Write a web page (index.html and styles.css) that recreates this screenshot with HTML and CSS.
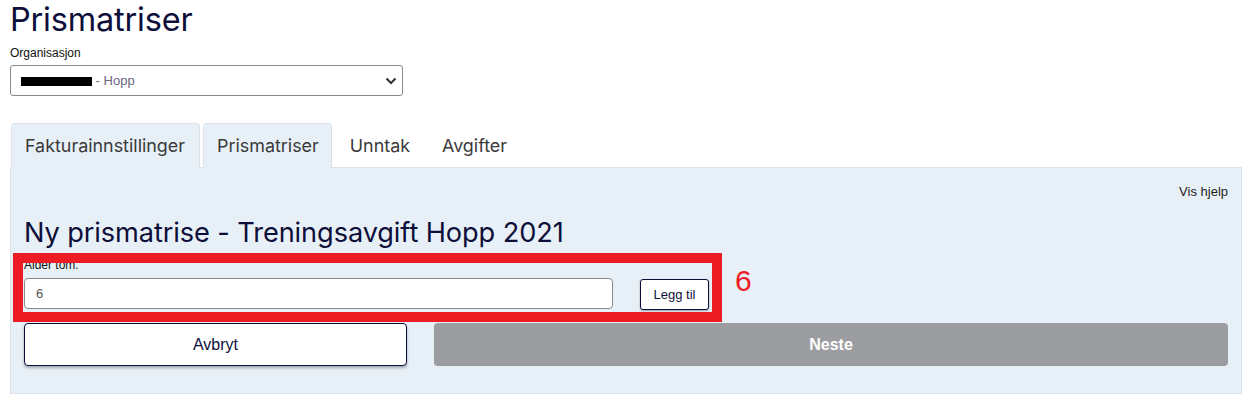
FILE: index.html
```html
<!doctype html>
<html>
<head>
<meta charset="utf-8">
<title>Prismatriser</title>
<link rel="stylesheet" href="styles.css">
</head>
<body>
<div class="page">
	<h1 class="title">Prismatriser</h1>

	<label class="small-label">Organisasjon</label>
	<div class="select-wrap">
		<div class="select"><span class="redacted"></span> - Hopp</div>
		<svg class="chevron" width="12" height="8" viewBox="0 0 12 8"><path d="M1.5 1.5 L6 6 L10.5 1.5" fill="none" stroke="#333" stroke-width="2"/></svg>
	</div>

	<ul class="tabs">
		<li class="tab filled">Fakturainnstillinger</li>
		<li class="tab filled">Prismatriser</li>
		<li class="tab">Unntak</li>
		<li class="tab">Avgifter</li>
	</ul>

	<div class="panel">
		<div class="help-row"><a class="help">Vis hjelp</a></div>
		<h2 class="sub-title">Ny prismatrise - Treningsavgift Hopp 2021</h2>

		<div class="age-block">
			<label class="small-label">Alder tom.</label>
			<div class="age-row">
				<input class="text-input" type="text" value="6">
				<div><button class="btn-add">Legg til</button></div>
			</div>
			<div class="mark"></div>
			<span class="mark-num">6</span>
		</div>

		<div class="actions">
			<button class="btn-cancel">Avbryt</button>
			<button class="btn-next">Neste</button>
		</div>
	</div>
</div>
</body>
</html>
```
FILE: styles.css
```css
*{margin:0;padding:0;box-sizing:border-box;list-style:none;}
body{background:#fff;font-family:"Liberation Sans",Arial,sans-serif;color:#1c1c1c;}
.page{padding:0 8px 0 10px;}

.title{font-family:Inter,sans-serif;font-weight:400;font-size:32.5px;line-height:40px;color:#0d0f3a;letter-spacing:-0.2px;}

.small-label{display:block;font-size:12px;line-height:14px;color:#111;margin-top:6px;}

.select-wrap{position:relative;width:393px;margin-top:5px;}
.select{height:31px;border:1px solid #8a8a8a;border-radius:3px;padding:0 0 0 10px;font-size:13px;line-height:29px;color:#6b6580;background:#fff;}
.redacted{display:inline-block;width:71px;height:9px;background:#000;vertical-align:-1px;}
.chevron{position:absolute;right:6px;top:12px;}

.tabs{display:flex;margin-top:27px;padding-left:1px;font-family:Inter,sans-serif;font-size:17.9px;color:#3a3a3a;}
.tab{height:45px;line-height:44px;padding:0 14px 0 13px;margin-right:3px;border:1px solid transparent;border-bottom:none;border-radius:4px 4px 0 0;}
.tab.filled{background:#e8f0f7;border-color:#dde2e8;}
.tab:nth-child(2){padding:0 12px 0 13px;}
.tab:nth-child(3){padding:0 14px 0 14px;}

.panel{background:#e8f0f7;border:1px solid #dde2e8;margin-top:-1px;padding:15px 13px 27px 13px;}
.help-row{display:flex;justify-content:flex-end;}
.help{font-size:13px;line-height:18px;color:#1c1c1c;}

.sub-title{font-family:Inter,sans-serif;font-weight:400;font-size:27.2px;line-height:32px;color:#0d0f3a;margin-top:16px;letter-spacing:-0.1px;}

.age-block{position:relative;margin-top:7px;padding-top:2px;}
.age-block .small-label{margin-top:0;}
.age-row{display:grid;grid-template-columns:1fr 1fr;gap:27px;margin-top:6px;}
.text-input{height:31px;border:1px solid #8a8a8a;border-radius:4px;padding:0 11px;font-family:"Liberation Sans",Arial,sans-serif;font-size:13px;color:#555;background:#fff;outline:none;}
.btn-add{height:31px;padding:0 13px;margin-top:1px;background:#fff;border:1px solid #0d0f3a;border-radius:3px;font-family:"Liberation Sans",Arial,sans-serif;font-size:13px;color:#0d0f3a;box-shadow:0 1px 2px rgba(0,0,0,0.35);}

.mark{position:absolute;left:-11px;top:-3px;width:709px;height:69px;border:10px solid #ed1c24;}
.mark-num{position:absolute;left:711px;top:8px;font-size:30px;line-height:34px;color:#ed1c24;}

.actions{display:grid;grid-template-columns:383px 1fr;gap:27px;margin-top:13px;}
.btn-cancel{height:43px;background:#fff;border:1px solid #0d0f3a;border-radius:4px;font-family:"Liberation Sans",Arial,sans-serif;font-size:16px;color:#0d0f3a;box-shadow:0 2px 3px rgba(0,0,0,0.3);}
.btn-next{height:43px;background:#9c9da0;border:none;border-radius:4px;font-family:"Liberation Sans",Arial,sans-serif;font-size:16px;font-weight:bold;color:#fff;}
```
